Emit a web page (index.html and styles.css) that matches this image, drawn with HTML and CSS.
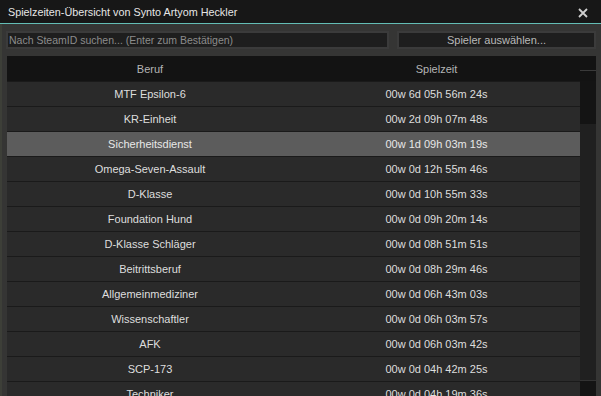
FILE: index.html
```html
<!DOCTYPE html>
<html lang="de">
<head>
    <meta charset="UTF-8">
    <title>Spielzeiten-Übersicht</title>
    <link rel="stylesheet" href="styles.css">
</head>
<body>
    <div class="frame">
        <div class="titlebar">
            <span class="title">Spielzeiten-Übersicht von Synto Artyom Heckler</span>
            <span class="close">
                <svg width="10" height="10" viewBox="0 0 10 10">
                    <path d="M1 1 L9 9 M9 1 L1 9" stroke="#cfcfcf" stroke-width="1.8" fill="none"/>
                </svg>
            </span>
        </div>

        <div class="content">
            <div class="toolbar">
                <input class="search" type="text" placeholder="Nach SteamID suchen... (Enter zum Bestätigen)">
                <button class="pick">Spieler auswählen...</button>
            </div>

            <div class="list">
                <div class="list-head">
                    <div class="col">Beruf</div>
                    <div class="col">Spielzeit</div>
                    <div class="head-gap"></div>
                </div>
                <div class="list-body">
                    <div class="rows" id="rows"></div>
                    <div class="scrollbar">
                        <div class="sb-up"></div>
                        <div class="sb-grip"></div>
                        <div class="sb-down"></div>
                    </div>
                </div>
            </div>
        </div>
    </div>

    <script>
        const times = [
            ["MTF Epsilon-6", "00w 6d 05h 56m 24s"],
            ["KR-Einheit", "00w 2d 09h 07m 48s"],
            ["Sicherheitsdienst", "00w 1d 09h 03m 19s"],
            ["Omega-Seven-Assault", "00w 0d 12h 55m 46s"],
            ["D-Klasse", "00w 0d 10h 55m 33s"],
            ["Foundation Hund", "00w 0d 09h 20m 14s"],
            ["D-Klasse Schläger", "00w 0d 08h 51m 51s"],
            ["Beitrittsberuf", "00w 0d 08h 29m 46s"],
            ["Allgemeinmediziner", "00w 0d 06h 43m 03s"],
            ["Wissenschaftler", "00w 0d 06h 03m 57s"],
            ["AFK", "00w 0d 06h 03m 42s"],
            ["SCP-173", "00w 0d 04h 42m 25s"],
            ["Techniker", "00w 0d 04h 19m 36s"]
        ];
        const selected = 2;

        const rows = document.getElementById("rows");
        times.forEach((item, index) => {
            const row = document.createElement("div");
            row.classList.add("row");
            if (index === selected) row.classList.add("selected");
            row.innerHTML = `<div class="col">${item[0]}</div><div class="col">${item[1]}</div>`;
            rows.appendChild(row);
        });
    </script>
</body>
</html>
```

FILE: styles.css
```css
body {
    margin: 0;
    background-color: #3b3b35;
    font-family: "Liberation Sans", Arial, sans-serif;
    overflow: hidden;
}
.frame {
    width: 601px;
    height: 396px;
    background-color: #353534;
    overflow: hidden;
}
.titlebar {
    height: 23px;
    background-color: #171717;
    border-bottom: 1px solid #63bdb5;
    display: flex;
    align-items: center;
    justify-content: space-between;
    padding: 0 13px 0 8px;
}
.title {
    color: #e6e6e6;
    font-size: 10.8px;
}
.close {
    display: flex;
    margin-top: 3px;
}
.content {
    border-left: 2px solid #3d3f38;
    margin-right: 5px;
    height: 372px;
}
.toolbar {
    display: flex;
    gap: 8px;
    padding: 7px 0 0 4px;
}
.search, .pick {
    height: 18px;
    box-sizing: border-box;
    background-color: #1e1e1e;
    border: 2px solid #3b3b3b;
    font-family: "Liberation Sans", Arial, sans-serif;
    font-size: 11px;
    margin: 0;
    outline: none;
}
.search {
    width: 383px;
    padding: 0 0 0 1px;
    color: #8c8c8c;
    font-size: 10.5px;
}
.search::placeholder {
    color: #8c8c8c;
}
.pick {
    width: 199px;
    color: #b9b9b9;
    padding: 0;
}
.list {
    margin: 7px 0 0 5px;
    width: 589px;
}
.list-head {
    display: grid;
    grid-template-columns: 286px 287px 16px;
    height: 25px;
    background-color: #131313;
    color: #b5b5b5;
    font-size: 11px;
}
.list-head .col {
    display: flex;
    align-items: center;
    justify-content: center;
}
.head-gap {
    height: 14px;
    border-bottom: 1px solid #3a3a3a;
}
.list-body {
    display: flex;
}
.rows {
    width: 573px;
}
.row {
    display: grid;
    grid-template-columns: 286px 287px;
    height: 24px;
    border-top: 1px solid #1a1a1a;
    background-color: #2a2a2a;
    color: #dedede;
    font-size: 11px;
}
.row.selected {
    background-color: #5c5c5c;
    color: #e8e8e8;
}
.row .col {
    display: flex;
    align-items: center;
    justify-content: center;
}
.scrollbar {
    width: 16px;
    display: flex;
    flex-direction: column;
}
.sb-up {
    height: 43px;
    background-color: #141414;
}
.sb-grip {
    height: 256px;
    background-color: #202020;
}
.sb-down {
    flex: 1;
    background-color: #141414;
    border-top: 1px solid #333;
}
```
